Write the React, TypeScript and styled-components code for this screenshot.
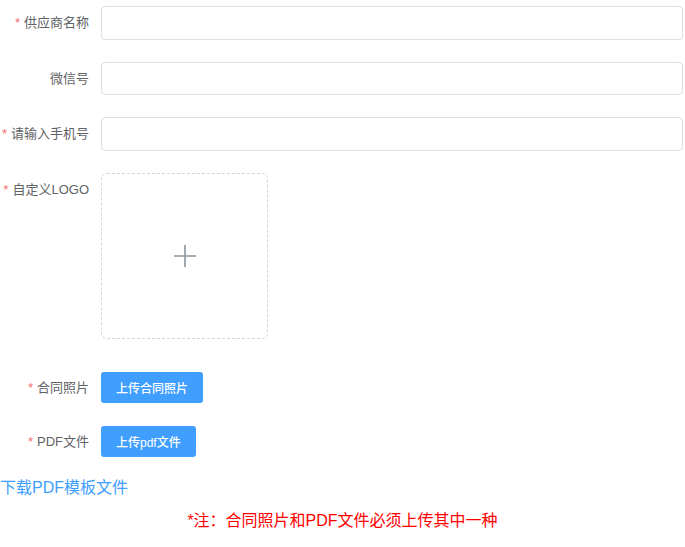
import React from 'react'
import styled, { createGlobalStyle } from 'styled-components'

const GlobalStyle = createGlobalStyle`
  html, body {
    margin: 0;
    padding: 0;
    background: #fff;
  }
  body {
    font-family: "Liberation Sans", "Noto Sans CJK SC", sans-serif;
  }
`

const Page = styled.div`
  width: 685px;
  padding-top: 6px;
`

const Form = styled.form`
  display: flex;
  flex-direction: column;
`

const Row = styled.div<{ gap: number }>`
  display: flex;
  align-items: flex-start;
  margin-bottom: ${p => p.gap}px;
`

const Label = styled.label<{ h: number }>`
  width: 101px;
  flex-shrink: 0;
  box-sizing: border-box;
  padding-right: 12px;
  text-align: right;
  font-size: 13px;
  color: #606266;
  line-height: ${p => p.h}px;
  white-space: nowrap;
`

const Star = styled.span`
  color: #f56c6c;
  margin-right: 4px;
`

const Input = styled.input`
  flex: 1;
  margin-right: 2px;
  height: 33.5px;
  box-sizing: border-box;
  border: 1px solid #dcdfe6;
  border-radius: 4px;
  padding: 0 15px;
  font-size: 13px;
  outline: none;
`

const Upload = styled.div`
  width: 167px;
  height: 166px;
  box-sizing: border-box;
  border: 1px dashed #d2d5db;
  border-radius: 6px;
  display: flex;
  align-items: center;
  justify-content: center;
`

const Button = styled.button`
  height: 31px;
  padding: 0 15px;
  border: none;
  border-radius: 3px;
  background: #409eff;
  color: #fff;
  font-family: "Liberation Sans", "Noto Sans CJK SC", sans-serif;
  font-size: 12px;
  font-weight: 500;
  cursor: pointer;
`

const DownloadLink = styled.a`
  display: block;
  font-size: 16px;
  line-height: 24px;
  color: #409eff;
  text-decoration: none;
  margin-top: 19px;
`

const Note = styled.p`
  margin: 9px 0 0;
  text-align: center;
  font-size: 16px;
  line-height: 24px;
  color: #ff0000;
`

function Plus() {
  return (
    <svg width="22" height="22" viewBox="0 0 22 22">
      <path d="M11 0v22M0 11h22" stroke="#8c939d" strokeWidth="1.6" fill="none" />
    </svg>
  )
}

export default function App() {
  return (
    <Page>
      <GlobalStyle />
      <Form onSubmit={e => e.preventDefault()}>
        <Row gap={22}>
          <Label h={33.5}><Star>*</Star>供应商名称</Label>
          <Input />
        </Row>
        <Row gap={22}>
          <Label h={33.5}>微信号</Label>
          <Input />
        </Row>
        <Row gap={22}>
          <Label h={33.5}><Star>*</Star>请输入手机号</Label>
          <Input />
        </Row>
        <Row gap={33.5}>
          <Label h={33.5}><Star>*</Star>自定义LOGO</Label>
          <Upload><Plus /></Upload>
        </Row>
        <Row gap={23}>
          <Label h={31}><Star>*</Star>合同照片</Label>
          <Button type="button">上传合同照片</Button>
        </Row>
        <Row gap={0}>
          <Label h={31}><Star>*</Star>PDF文件</Label>
          <Button type="button">上传pdf文件</Button>
        </Row>
      </Form>
      <DownloadLink href="#">下载PDF模板文件</DownloadLink>
      <Note>*注：合同照片和PDF文件必须上传其中一种</Note>
    </Page>
  )
}
